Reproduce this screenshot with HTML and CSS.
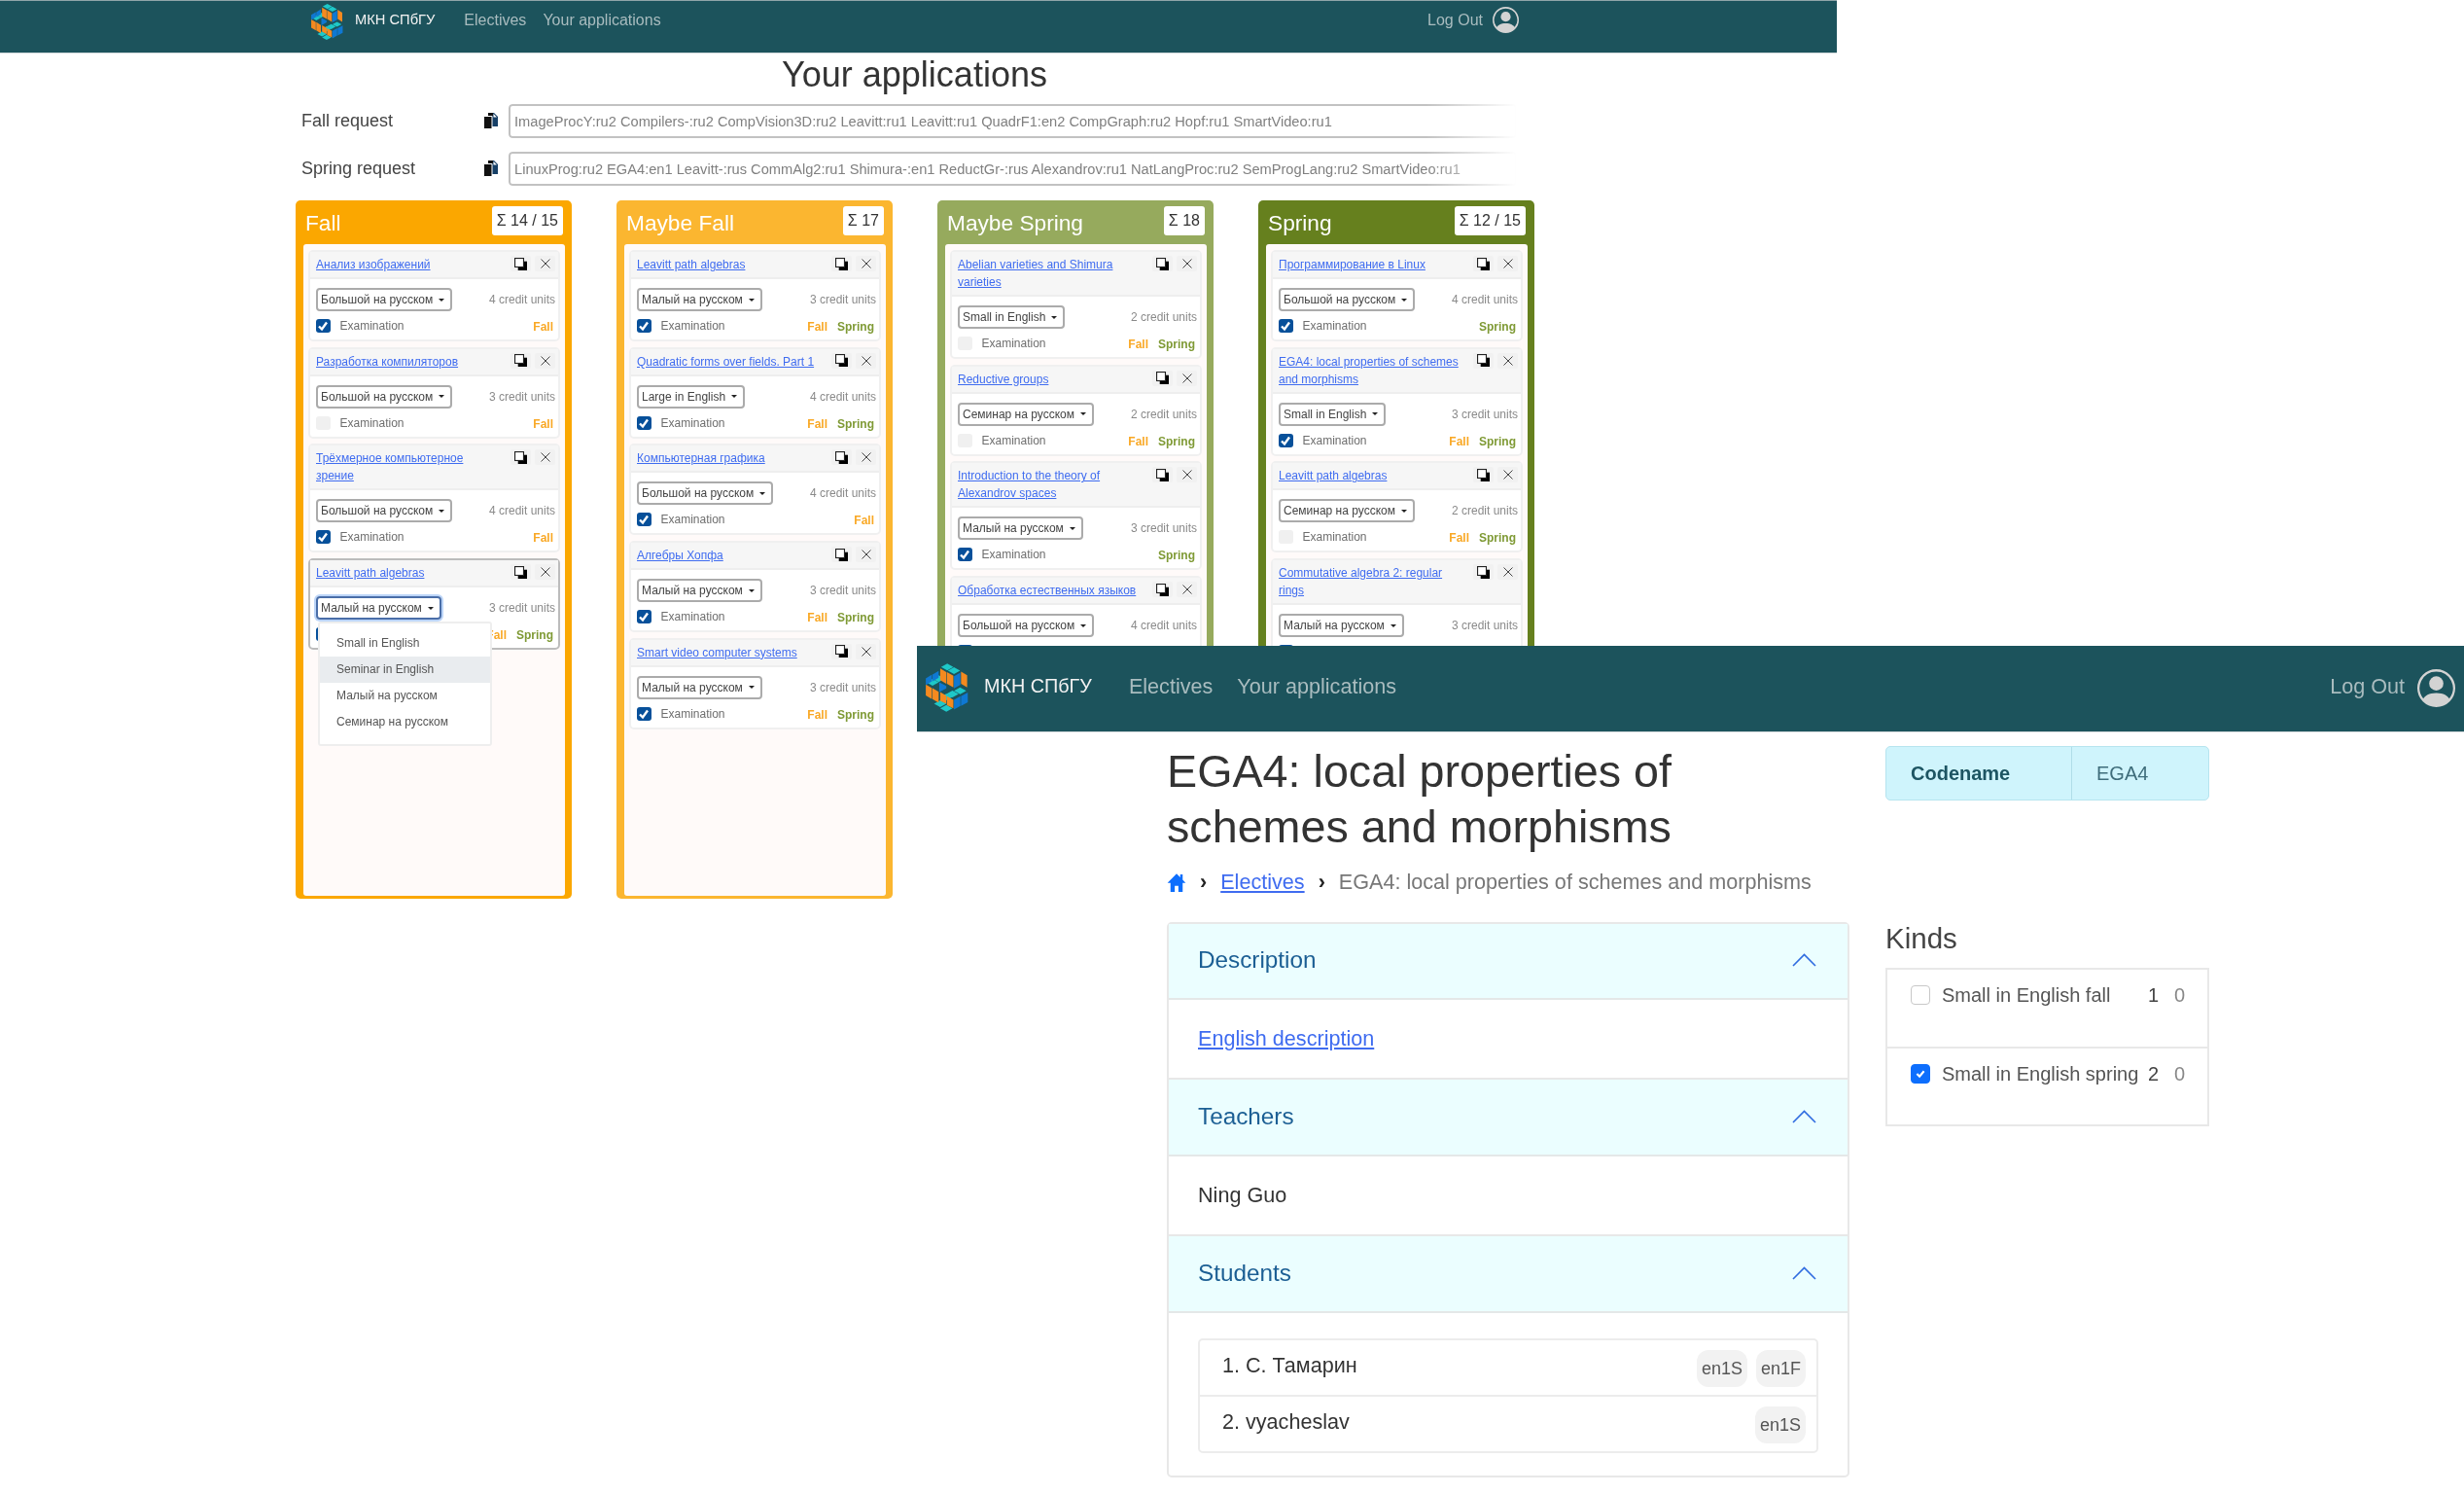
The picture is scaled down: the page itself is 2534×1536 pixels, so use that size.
FILE: index.html
```html
<!DOCTYPE html>
<html lang="en">
<head>
    <meta charset="UTF-8">
    <meta name="viewport" content="width=device-width, initial-scale=1.0">
    <title>Your applications</title>
    <link rel="stylesheet" href="styles.css">
</head>
<body>
    <svg class="defs" width="0" height="0">
        <symbol id="logo" viewBox="15 15 145 165">
            <g fill="#1ec8c8">
                <polygon points="68,30 88,19 108,30 88,41"/>
                <polygon points="90,42 110,31 130,42 110,53"/>
                <polygon points="40,68 60,57 80,68 60,79"/>
                <polygon points="20,80 40,69 60,80 40,91"/>
                <polygon points="85,118 105,107 125,118 105,129"/>
                <polygon points="110,108 130,97 150,108 130,119"/>
                <polygon points="65,128 85,117 105,128 85,139"/>
                <polygon points="45,150 65,139 85,150 65,161"/>
                <polygon points="65,165 85,154 105,165 85,176"/>
            </g>
            <g fill="#f58a1f">
                <polygon points="65,35 85,47 85,85 65,73"/>
                <polygon points="87,47 108,59 108,97 87,85"/>
                <polygon points="133,45 153,57 153,97 133,85"/>
                <polygon points="18,87 38,99 38,135 18,123"/>
                <polygon points="40,99 60,111 60,147 40,135"/>
                <polygon points="65,112 85,124 85,150 65,140"/>
                <polygon points="87,125 108,137 108,165 87,155"/>
            </g>
            <g fill="#0f78d2">
                <polygon points="40,55 60,43 60,65 40,77"/>
                <polygon points="18,67 38,55 38,77 18,89"/>
                <polygon points="110,60 131,48 131,88 110,100"/>
                <polygon points="62,80 85,92 85,100 62,112"/>
                <polygon points="133,125 155,113 155,145 133,157"/>
                <polygon points="110,137 131,125 131,157 110,169"/>
            </g>
        </symbol>
        <symbol id="user" viewBox="0 0 16 16">
            <path d="M11 6a3 3 0 1 1-6 0 3 3 0 0 1 6 0z"/>
            <path fill-rule="evenodd" d="M0 8a8 8 0 1 1 16 0A8 8 0 0 1 0 8zm8-7a7 7 0 0 0-5.468 11.37C3.242 11.226 4.805 10 8 10s4.757 1.225 5.468 2.37A7 7 0 0 0 8 1z"/>
        </symbol>
        <symbol id="files" viewBox="0 0 15 17">
            <path fill="#163f66" d="M5 0h6l4 4v10H5z"/>
            <path fill="#fff" d="M10.5 1v3.5H14z"/>
            <path fill="#111" stroke="#fff" stroke-width="1" d="M0.5 3.5h8.5v13H0.5z"/>
            <path fill="#111" d="M5 0h5v3H5z"/>
        </symbol>
        <symbol id="dup" viewBox="0 0 14 14">
            <rect x="4" y="4" width="10" height="10" fill="#000"/>
            <rect x="0.6" y="0.6" width="9.6" height="9.6" fill="#fff" stroke="#222" stroke-width="1.2"/>
        </symbol>
        <symbol id="cross" viewBox="0 0 10 10">
            <path d="M0.5 0.5L9.5 9.5M9.5 0.5L0.5 9.5" stroke="#444" stroke-width="1" fill="none"/>
        </symbol>
        <symbol id="chev" viewBox="0 0 25 14">
            <path d="M1 13L12.5 1.5L24 13" stroke="#2f6ce0" stroke-width="1.6" fill="none"/>
        </symbol>
    </svg>

    <!-- window behind: applications board -->
    <section class="window window-back">
        <nav class="nav nav-small">
            <a class="brand"><svg class="logo"><use href="#logo"/></svg><span>МКН СПбГУ</span></a>
            <a class="nav-link">Electives</a>
            <a class="nav-link">Your applications</a>
            <span class="nav-right"><a class="nav-link">Log Out</a><svg class="user"><use href="#user"/></svg></span>
        </nav>
        <h1 class="page-title">Your applications</h1>
        <div class="request">
            <label class="request-label">Fall request</label>
            <svg class="files"><use href="#files"/></svg>
            <input class="request-input" type="text" readonly value="ImageProcY:ru2 Compilers-:ru2 CompVision3D:ru2 Leavitt:ru1 Leavitt:ru1 QuadrF1:en2 CompGraph:ru2 Hopf:ru1 SmartVideo:ru1">
        </div>
        <div class="request">
            <label class="request-label">Spring request</label>
            <svg class="files"><use href="#files"/></svg>
            <input class="request-input" type="text" readonly value="LinuxProg:ru2 EGA4:en1 Leavitt-:rus CommAlg2:ru1 Shimura-:en1 ReductGr-:rus Alexandrov:ru1 NatLangProc:ru2 SemProgLang:ru2 SmartVideo:ru1">
        </div>

        <div class="board">
            <div class="column col-fall">
                <div class="column-head"><span>Fall</span><b class="sum">Σ 14 / 15</b></div>
                <div class="column-body">
                    <div class="card">
                        <div class="card-head"><a class="title">Анализ изображений</a><span class="tools"><i><svg class="ico-dup"><use href="#dup"/></svg></i><i><svg class="ico-cross"><use href="#cross"/></svg></i></span></div>
                        <div class="card-body">
                            <div class="line"><span class="picker">Большой на русском</span><span class="credits">4 credit units</span></div>
                            <div class="line line-exam"><input class="exam" type="checkbox" checked><span class="exam-label">Examination</span><span class="tags"><b class="fall">Fall</b></span></div>
                        </div>
                    </div>
                    <div class="card">
                        <div class="card-head"><a class="title">Разработка компиляторов</a><span class="tools"><i><svg class="ico-dup"><use href="#dup"/></svg></i><i><svg class="ico-cross"><use href="#cross"/></svg></i></span></div>
                        <div class="card-body">
                            <div class="line"><span class="picker">Большой на русском</span><span class="credits">3 credit units</span></div>
                            <div class="line line-exam"><input class="exam" type="checkbox"><span class="exam-label">Examination</span><span class="tags"><b class="fall">Fall</b></span></div>
                        </div>
                    </div>
                    <div class="card">
                        <div class="card-head"><a class="title">Трёхмерное компьютерное зрение</a><span class="tools"><i><svg class="ico-dup"><use href="#dup"/></svg></i><i><svg class="ico-cross"><use href="#cross"/></svg></i></span></div>
                        <div class="card-body">
                            <div class="line"><span class="picker">Большой на русском</span><span class="credits">4 credit units</span></div>
                            <div class="line line-exam"><input class="exam" type="checkbox" checked><span class="exam-label">Examination</span><span class="tags"><b class="fall">Fall</b></span></div>
                        </div>
                    </div>
                    <div class="card card-open">
                        <div class="card-head"><a class="title">Leavitt path algebras</a><span class="tools"><i><svg class="ico-dup"><use href="#dup"/></svg></i><i><svg class="ico-cross"><use href="#cross"/></svg></i></span></div>
                        <div class="card-body">
                            <div class="line"><span class="picker picker-focus">Малый на русском</span><span class="credits">3 credit units</span></div>
                            <div class="line line-exam"><input class="exam" type="checkbox" checked><span class="exam-label">Examination</span><span class="tags"><b class="fall">Fall</b><b class="spring">Spring</b></span></div>
                        </div>
                        <ul class="menu">
                            <li>Small in English</li>
                            <li class="menu-active">Seminar in English</li>
                            <li>Малый на русском</li>
                            <li>Семинар на русском</li>
                        </ul>
                    </div>
                </div>
            </div>

            <div class="column col-maybe-fall">
                <div class="column-head"><span>Maybe Fall</span><b class="sum">Σ 17</b></div>
                <div class="column-body">
                    <div class="card">
                        <div class="card-head"><a class="title">Leavitt path algebras</a><span class="tools"><i><svg class="ico-dup"><use href="#dup"/></svg></i><i><svg class="ico-cross"><use href="#cross"/></svg></i></span></div>
                        <div class="card-body">
                            <div class="line"><span class="picker">Малый на русском</span><span class="credits">3 credit units</span></div>
                            <div class="line line-exam"><input class="exam" type="checkbox" checked><span class="exam-label">Examination</span><span class="tags"><b class="fall">Fall</b><b class="spring">Spring</b></span></div>
                        </div>
                    </div>
                    <div class="card">
                        <div class="card-head"><a class="title">Quadratic forms over fields. Part 1</a><span class="tools"><i><svg class="ico-dup"><use href="#dup"/></svg></i><i><svg class="ico-cross"><use href="#cross"/></svg></i></span></div>
                        <div class="card-body">
                            <div class="line"><span class="picker">Large in English</span><span class="credits">4 credit units</span></div>
                            <div class="line line-exam"><input class="exam" type="checkbox" checked><span class="exam-label">Examination</span><span class="tags"><b class="fall">Fall</b><b class="spring">Spring</b></span></div>
                        </div>
                    </div>
                    <div class="card">
                        <div class="card-head"><a class="title">Компьютерная графика</a><span class="tools"><i><svg class="ico-dup"><use href="#dup"/></svg></i><i><svg class="ico-cross"><use href="#cross"/></svg></i></span></div>
                        <div class="card-body">
                            <div class="line"><span class="picker">Большой на русском</span><span class="credits">4 credit units</span></div>
                            <div class="line line-exam"><input class="exam" type="checkbox" checked><span class="exam-label">Examination</span><span class="tags"><b class="fall">Fall</b></span></div>
                        </div>
                    </div>
                    <div class="card">
                        <div class="card-head"><a class="title">Алгебры Хопфа</a><span class="tools"><i><svg class="ico-dup"><use href="#dup"/></svg></i><i><svg class="ico-cross"><use href="#cross"/></svg></i></span></div>
                        <div class="card-body">
                            <div class="line"><span class="picker">Малый на русском</span><span class="credits">3 credit units</span></div>
                            <div class="line line-exam"><input class="exam" type="checkbox" checked><span class="exam-label">Examination</span><span class="tags"><b class="fall">Fall</b><b class="spring">Spring</b></span></div>
                        </div>
                    </div>
                    <div class="card">
                        <div class="card-head"><a class="title">Smart video computer systems</a><span class="tools"><i><svg class="ico-dup"><use href="#dup"/></svg></i><i><svg class="ico-cross"><use href="#cross"/></svg></i></span></div>
                        <div class="card-body">
                            <div class="line"><span class="picker">Малый на русском</span><span class="credits">3 credit units</span></div>
                            <div class="line line-exam"><input class="exam" type="checkbox" checked><span class="exam-label">Examination</span><span class="tags"><b class="fall">Fall</b><b class="spring">Spring</b></span></div>
                        </div>
                    </div>
                </div>
            </div>

            <div class="column col-maybe-spring">
                <div class="column-head"><span>Maybe Spring</span><b class="sum">Σ 18</b></div>
                <div class="column-body">
                    <div class="card">
                        <div class="card-head"><a class="title">Abelian varieties and Shimura varieties</a><span class="tools"><i><svg class="ico-dup"><use href="#dup"/></svg></i><i><svg class="ico-cross"><use href="#cross"/></svg></i></span></div>
                        <div class="card-body">
                            <div class="line"><span class="picker">Small in English</span><span class="credits">2 credit units</span></div>
                            <div class="line line-exam"><input class="exam" type="checkbox"><span class="exam-label">Examination</span><span class="tags"><b class="fall">Fall</b><b class="spring">Spring</b></span></div>
                        </div>
                    </div>
                    <div class="card">
                        <div class="card-head"><a class="title">Reductive groups</a><span class="tools"><i><svg class="ico-dup"><use href="#dup"/></svg></i><i><svg class="ico-cross"><use href="#cross"/></svg></i></span></div>
                        <div class="card-body">
                            <div class="line"><span class="picker">Семинар на русском</span><span class="credits">2 credit units</span></div>
                            <div class="line line-exam"><input class="exam" type="checkbox"><span class="exam-label">Examination</span><span class="tags"><b class="fall">Fall</b><b class="spring">Spring</b></span></div>
                        </div>
                    </div>
                    <div class="card">
                        <div class="card-head"><a class="title">Introduction to the theory of Alexandrov spaces</a><span class="tools"><i><svg class="ico-dup"><use href="#dup"/></svg></i><i><svg class="ico-cross"><use href="#cross"/></svg></i></span></div>
                        <div class="card-body">
                            <div class="line"><span class="picker">Малый на русском</span><span class="credits">3 credit units</span></div>
                            <div class="line line-exam"><input class="exam" type="checkbox" checked><span class="exam-label">Examination</span><span class="tags"><b class="spring">Spring</b></span></div>
                        </div>
                    </div>
                    <div class="card">
                        <div class="card-head"><a class="title">Обработка естественных языков</a><span class="tools"><i><svg class="ico-dup"><use href="#dup"/></svg></i><i><svg class="ico-cross"><use href="#cross"/></svg></i></span></div>
                        <div class="card-body">
                            <div class="line"><span class="picker">Большой на русском</span><span class="credits">4 credit units</span></div>
                            <div class="line line-exam"><input class="exam" type="checkbox" checked><span class="exam-label">Examination</span></div>
                        </div>
                    </div>
                </div>
            </div>

            <div class="column col-spring">
                <div class="column-head"><span>Spring</span><b class="sum">Σ 12 / 15</b></div>
                <div class="column-body">
                    <div class="card">
                        <div class="card-head"><a class="title">Программирование в Linux</a><span class="tools"><i><svg class="ico-dup"><use href="#dup"/></svg></i><i><svg class="ico-cross"><use href="#cross"/></svg></i></span></div>
                        <div class="card-body">
                            <div class="line"><span class="picker">Большой на русском</span><span class="credits">4 credit units</span></div>
                            <div class="line line-exam"><input class="exam" type="checkbox" checked><span class="exam-label">Examination</span><span class="tags"><b class="spring">Spring</b></span></div>
                        </div>
                    </div>
                    <div class="card">
                        <div class="card-head"><a class="title">EGA4: local properties of schemes and morphisms</a><span class="tools"><i><svg class="ico-dup"><use href="#dup"/></svg></i><i><svg class="ico-cross"><use href="#cross"/></svg></i></span></div>
                        <div class="card-body">
                            <div class="line"><span class="picker">Small in English</span><span class="credits">3 credit units</span></div>
                            <div class="line line-exam"><input class="exam" type="checkbox" checked><span class="exam-label">Examination</span><span class="tags"><b class="fall">Fall</b><b class="spring">Spring</b></span></div>
                        </div>
                    </div>
                    <div class="card">
                        <div class="card-head"><a class="title">Leavitt path algebras</a><span class="tools"><i><svg class="ico-dup"><use href="#dup"/></svg></i><i><svg class="ico-cross"><use href="#cross"/></svg></i></span></div>
                        <div class="card-body">
                            <div class="line"><span class="picker">Семинар на русском</span><span class="credits">2 credit units</span></div>
                            <div class="line line-exam"><input class="exam" type="checkbox"><span class="exam-label">Examination</span><span class="tags"><b class="fall">Fall</b><b class="spring">Spring</b></span></div>
                        </div>
                    </div>
                    <div class="card">
                        <div class="card-head"><a class="title">Commutative algebra 2: regular rings</a><span class="tools"><i><svg class="ico-dup"><use href="#dup"/></svg></i><i><svg class="ico-cross"><use href="#cross"/></svg></i></span></div>
                        <div class="card-body">
                            <div class="line"><span class="picker">Малый на русском</span><span class="credits">3 credit units</span></div>
                            <div class="line line-exam"><input class="exam" type="checkbox" checked><span class="exam-label">Examination</span></div>
                        </div>
                    </div>
                </div>
            </div>
        </div>
    </section>

    <!-- window in front: elective page -->
    <section class="window window-front">
        <nav class="nav nav-large">
            <a class="brand"><svg class="logo"><use href="#logo"/></svg><span>МКН СПбГУ</span></a>
            <a class="nav-link">Electives</a>
            <a class="nav-link">Your applications</a>
            <span class="nav-right"><a class="nav-link">Log Out</a><svg class="user"><use href="#user"/></svg></span>
        </nav>
        <div class="elective">
            <div class="elective-main">
                <h1 class="elective-title">EGA4: local properties of schemes and morphisms</h1>
                <div class="crumbs">
                    <svg class="home" viewBox="0 0 16 16"><path fill="#0d6efd" d="M8 1L0.5 8.5H3V16h3.5v-5h3v5H13V8.5h2.5L13 6V1.5h-2V4z"/></svg>
                    <b class="crumb-sep">›</b>
                    <a class="link">Electives</a>
                    <b class="crumb-sep">›</b>
                    <span class="crumb-now">EGA4: local properties of schemes and morphisms</span>
                </div>
                <div class="accordion">
                    <div class="acc-head"><span>Description</span><svg class="chev"><use href="#chev"/></svg></div>
                    <div class="acc-body"><a class="link">English description</a></div>
                    <div class="acc-head"><span>Teachers</span><svg class="chev"><use href="#chev"/></svg></div>
                    <div class="acc-body">Ning Guo</div>
                    <div class="acc-head"><span>Students</span><svg class="chev"><use href="#chev"/></svg></div>
                    <div class="acc-list">
                        <div class="students">
                            <div class="student"><span>1. С. Тамарин</span><span class="pills"><span class="pill">en1S</span><span class="pill">en1F</span></span></div>
                            <div class="student"><span>2. vyacheslav</span><span class="pills"><span class="pill">en1S</span></span></div>
                        </div>
                    </div>
                </div>
            </div>
            <aside class="elective-side">
                <div class="codename"><b class="codename-key">Codename</b><span class="codename-val">EGA4</span></div>
                <h2 class="kinds-title">Kinds</h2>
                <div class="kinds">
                    <div class="kind"><input class="kind-check" type="checkbox"><span class="kind-name">Small in English fall</span><span class="num">1</span><span class="num num-muted">0</span></div>
                    <div class="kind"><input class="kind-check" type="checkbox" checked><span class="kind-name">Small in English spring</span><span class="num">2</span><span class="num num-muted">0</span></div>
                </div>
            </aside>
        </div>
    </section>
</body>
</html>
```

FILE: styles.css
```css
* {
    box-sizing: border-box;
}
body {
    margin: 0;
    width: 2534px;
    height: 1536px;
    position: relative;
    overflow: hidden;
    background-color: #fff;
    font-family: "Liberation Sans", Arial, sans-serif;
    color: #333;
}
.defs {
    position: absolute;
}

/* the two windows lie on a free canvas */
.window {
    position: absolute;
    background-color: #fff;
    overflow: hidden;
    filter: blur(0.4px);
}
.window-back {
    left: 0;
    top: 0;
    width: 1889px;
    height: 1000px;
}
.window-front {
    left: 943px;
    top: 664px;
    width: 1591px;
    height: 872px;
}

/* nav */
.nav {
    display: flex;
    background-color: #1c535c;
    color: #fff;
}
.nav-small {
    height: 55px;
    padding: 2px 327px 0 319px;
    font-size: 16px;
    border-top: 1px solid #8fa5a9;
    border-bottom: 1px solid #cfd8da;
    gap: 17px;
}
.nav-large {
    height: 89px;
    padding: 17px 9px 0 8px;
    font-size: 21.6px;
    border-bottom: 1px solid #d5dbdd;
    gap: 25px;
}
.brand {
    display: flex;
    align-items: flex-start;
    color: #f2f2f2;
}
.nav-small .brand {
    gap: 11px;
    margin-right: 13px;
    font-size: 14.7px;
    line-height: 34px;
}
.nav-large .brand {
    gap: 15px;
    margin-right: 13px;
    font-size: 19.8px;
    line-height: 48px;
}
.nav-small .logo {
    width: 35px;
    height: 39px;
}
.nav-large .logo {
    width: 46px;
    height: 52px;
}
.nav-link {
    color: #a9bcbf;
}
.nav-small .nav-link {
    line-height: 36px;
}
.nav-large .nav-link {
    line-height: 50px;
}
.nav-right {
    display: flex;
    align-items: flex-start;
    margin-left: auto;
}
.user {
    fill: #d3d3d3;
}
.nav-small .user {
    width: 27px;
    height: 27px;
    margin: 4px 0 0 10px;
}
.nav-large .user {
    width: 39px;
    height: 39px;
    margin: 7px 0 0 13px;
}

/* request rows */
.page-title {
    margin: 0;
    font-size: 36px;
    font-weight: 400;
    line-height: 44px;
    text-align: center;
    padding-right: 8px;
    color: #333;
}
.request {
    display: flex;
    align-items: center;
    margin-top: 8px;
    padding-left: 310px;
}
.request + .request {
    margin-top: 14px;
}
.request-label {
    width: 187px;
    font-size: 18px;
    color: #444;
}
.files {
    width: 15px;
    height: 17px;
    margin-right: 11px;
}
.request-input {
    width: 1037px;
    height: 35px;
    padding: 0 4px;
    border: 2px solid #c2c2c2;
    border-radius: 4px;
    font-family: inherit;
    font-size: 14.64px;
    color: #808080;
    -webkit-mask-image: linear-gradient(to right, #000 91%, transparent 100%);
    mask-image: linear-gradient(to right, #000 91%, transparent 100%);
}

/* board */
.board {
    display: flex;
    gap: 46px;
    margin-top: 15px;
    padding-left: 304px;
}
.column {
    display: flex;
    flex-direction: column;
    width: 284px;
    height: 718px;
    padding: 0 7px 3px 8px;
    border-radius: 5px;
}
.col-fall {
    background-color: #fba700;
}
.col-maybe-fall {
    background-color: #fbb630;
}
.col-maybe-spring {
    background-color: #96aa5d;
}
.col-spring {
    background-color: #66801e;
}
.column-head {
    display: flex;
    justify-content: space-between;
    height: 45px;
    padding: 6px 2px 0 2px;
    font-size: 22.7px;
    color: #fff;
}
.column-head span {
    line-height: 34px;
}
.sum {
    height: 30px;
    padding: 0 5px;
    border-radius: 3px;
    background-color: #fff;
    color: #333;
    font-size: 16px;
    font-weight: 400;
    line-height: 30px;
}
.column-body {
    display: flex;
    flex-direction: column;
    gap: 5.7px;
    flex: 1;
    padding: 6px 5px;
    border-radius: 3px;
    background-color: #fffaf9;
}

/* cards */
.card {
    position: relative;
    border: 2px solid #f0f0f0;
    border-radius: 5px;
    background-color: #fff;
    font-size: 12px;
}
.card-open {
    border-color: #bcbcbc;
}
.card-head {
    display: flex;
    gap: 10px;
    padding: 4px 3px 4px 6px;
    border-bottom: 2px solid #eee;
    background-color: #f6f6f6;
    line-height: 18px;
}
.title {
    flex: 1;
    color: #3f6cf0;
    text-decoration: underline;
}
.tools {
    display: flex;
    gap: 4px;
}
.tools i {
    display: flex;
    align-items: center;
    justify-content: center;
    width: 21px;
    height: 16px;
    border-radius: 2px;
    background-color: #f1f1f1;
}
.ico-dup {
    width: 13px;
    height: 13px;
}
.ico-cross {
    width: 10px;
    height: 10px;
}
.card-body {
    padding: 9px 3px 7px 6px;
}
.line {
    display: flex;
    align-items: center;
    justify-content: space-between;
}
.picker {
    display: flex;
    align-items: center;
    height: 24px;
    padding: 0 6px 0 3px;
    border: 2px solid #ababab;
    border-radius: 4px;
    color: #444;
}
.picker::after {
    content: "";
    margin-left: 6px;
    border-top: 3.5px solid #222;
    border-left: 3px solid transparent;
    border-right: 3px solid transparent;
}
.picker-focus {
    border-color: #4a6ea8;
    box-shadow: 0 0 0 2px #bcd5f8;
}
.credits {
    color: #8a8a8a;
}
.line-exam {
    justify-content: flex-start;
    height: 14px;
    margin-top: 8px;
}
.exam {
    appearance: none;
    flex: none;
    width: 14.5px;
    height: 14px;
    margin: 0 10px 0 0;
    border-radius: 3px;
    background-color: #f0f0f0;
}
.exam:checked {
    background: #07509a url("data:image/svg+xml,%3Csvg xmlns='http://www.w3.org/2000/svg' viewBox='0 0 14 14'%3E%3Cpath d='M3 7.5l3 3 5-7' stroke='%23fff' stroke-width='2.4' fill='none'/%3E%3C/svg%3E");
}
.exam-label {
    color: #6e6e6e;
}
.tags {
    display: flex;
    gap: 10px;
    margin-left: auto;
    padding: 2px 2px 0 0;
}
.fall {
    color: #f9a825;
}
.spring {
    color: #7f9a35;
}

/* open dropdown over the last card */
.menu {
    position: absolute;
    left: 8px;
    top: 63px;
    z-index: 2;
    width: 179px;
    height: 128px;
    margin: 0;
    padding: 7px 0;
    border: 2px solid #eee;
    border-radius: 3px;
    background-color: #fff;
    list-style: none;
    color: #555;
}
.menu li {
    height: 27px;
    padding-left: 17px;
    line-height: 27px;
}
.menu-active {
    background-color: #e9ecef;
}

/* elective page */
.elective {
    display: grid;
    grid-template-columns: 702px 333px;
    gap: 37px;
    padding: 12px 0 0 257px;
    font-size: 21.6px;
}
.elective-title {
    margin: 0;
    font-size: 46.7px;
    font-weight: 400;
    line-height: 56.5px;
}
.crumbs {
    display: flex;
    align-items: center;
    gap: 14px;
    height: 26px;
    margin-top: 16px;
}
.home {
    width: 20px;
    height: 20px;
}
.crumb-sep {
    color: #222;
}
.crumb-now {
    color: #777;
}
.link {
    color: #3f6cf0;
    text-decoration: underline;
}
.accordion {
    margin-top: 28px;
    border: 2px solid #e8e8e8;
    border-radius: 5px;
}
.acc-head {
    display: flex;
    align-items: center;
    justify-content: space-between;
    height: 79px;
    padding: 0 32px 2px 30px;
    border-bottom: 2px solid #e4e8e8;
    background-color: #ebfeff;
    color: #1c5f94;
    font-size: 24.3px;
}
.accordion > .acc-head:first-child {
    height: 78px;
}
.chev {
    width: 25px;
    height: 14px;
}
.acc-body {
    display: flex;
    align-items: center;
    height: 82px;
    padding: 0 30px;
    border-bottom: 2px solid #e8e8e8;
}
.acc-list {
    padding: 26px 30px 23px;
}
.students {
    border: 2px solid #ececec;
    border-radius: 5px;
}
.student {
    display: flex;
    align-items: center;
    justify-content: space-between;
    height: 56px;
    padding: 0 11px 4px 23px;
}
.student + .student {
    border-top: 2px solid #ececec;
    height: 58px;
}
.pills {
    display: flex;
    gap: 9px;
    margin-top: 6px;
}
.pill {
    height: 38px;
    padding: 0 5px;
    border-radius: 12px;
    background-color: #f2f2f2;
    color: #555;
    font-size: 18px;
    line-height: 38px;
}

/* side */
.codename {
    display: flex;
    height: 56px;
    margin-top: 2px;
    border: 1px solid #b6e4ef;
    border-radius: 5px;
    background-color: #cff4fc;
    font-size: 20px;
    line-height: 54px;
}
.codename-key {
    width: 191px;
    padding-left: 25px;
    border-right: 1px solid #b0dde8;
    color: #1d5563;
}
.codename-val {
    padding-left: 25px;
    color: #3f6d7b;
}
.kinds-title {
    margin: 124px 0 0;
    font-size: 29.5px;
    font-weight: 400;
    line-height: 35px;
    color: #444;
}
.kinds {
    margin-top: 13px;
    border: 2px solid #e8e8e8;
}
.kind {
    display: flex;
    align-items: flex-start;
    height: 79px;
    padding: 14px 7px 0 24px;
    font-size: 20px;
    line-height: 24px;
    color: #555;
}
.kind + .kind {
    height: 80px;
    border-top: 2px solid #e8e8e8;
}
.kind-check {
    appearance: none;
    flex: none;
    width: 20px;
    height: 20px;
    margin: 2px 12px 0 0;
    border: 1px solid #c8c8c8;
    border-radius: 4px;
    background-color: #fff;
}
.kind-check:checked {
    border-color: #0d6efd;
    background: #0d6efd url("data:image/svg+xml,%3Csvg xmlns='http://www.w3.org/2000/svg' viewBox='0 0 20 20'%3E%3Cpath d='M6 10l3 3 5-6' stroke='%23fff' stroke-width='2.4' fill='none'/%3E%3C/svg%3E");
}
.kind-name {
    flex: 1;
}
.num {
    width: 27px;
    color: #444;
}
.num-muted {
    color: #888;
}
```
